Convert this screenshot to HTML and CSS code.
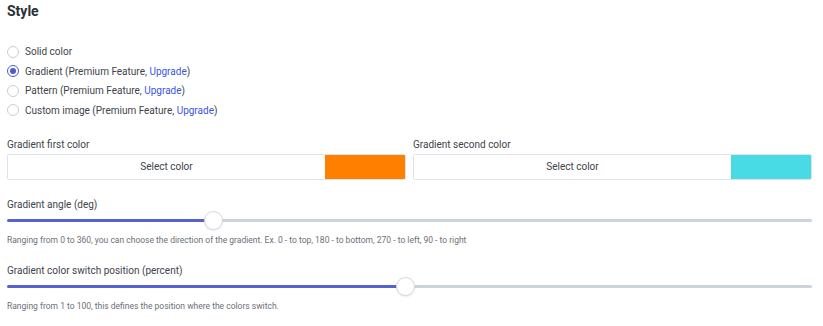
FILE: index.html
```html
<!DOCTYPE html>
<html>
<head>
<meta charset="utf-8">
<link rel="stylesheet" href="styles.css">
</head>
<body>
<div class="panel">
  <h2 class="title">Style</h2>
  <div class="radios">
    <label class="radio"><input type="radio" name="style"><span>Solid color</span></label>
    <label class="radio"><input type="radio" name="style" checked><span>Gradient (Premium Feature, <a href="#">Upgrade</a>)</span></label>
    <label class="radio"><input type="radio" name="style"><span>Pattern (Premium Feature, <a href="#">Upgrade</a>)</span></label>
    <label class="radio"><input type="radio" name="style"><span>Custom image (Premium Feature, <a href="#">Upgrade</a>)</span></label>
  </div>
  <div class="colors">
    <div class="field">
      <div class="label">Gradient first color</div>
      <div class="picker"><button class="select">Select color</button><span class="swatch orange"></span></div>
    </div>
    <div class="field">
      <div class="label">Gradient second color</div>
      <div class="picker"><button class="select">Select color</button><span class="swatch cyan"></span></div>
    </div>
  </div>
  <div class="slider-field">
    <div class="label">Gradient angle (deg)</div>
    <input class="range" type="range" min="0" max="360" value="90" style="--p:25%">
    <div class="help">Ranging from 0 to 360, you can choose the direction of the gradient. Ex. 0 - to top, 180 - to bottom, 270 - to left, 90 - to right</div>
  </div>
  <div class="slider-field">
    <div class="label">Gradient color switch position (percent)</div>
    <input class="range" type="range" min="1" max="100" value="50" style="--p:49.5%">
    <div class="help">Ranging from 1 to 100, this defines the position where the colors switch.</div>
  </div>
</div>
</body>
</html>
```
FILE: styles.css
```css
* { box-sizing: border-box; }
html, body { margin: 0; padding: 0; background: #fff; }
body {
  font-family: Roboto, "Liberation Sans", sans-serif;
  color: #3d4149;
}
.panel {
  width: 805px;
  margin-left: 7px;
  display: flex;
  flex-direction: column;
}
.title {
  margin: 0;
  font-size: 14px;
  font-weight: 700;
  line-height: 20px;
  padding-top: 1px;
  color: #2b2f36;
}
.radios {
  display: flex;
  flex-direction: column;
  gap: 6.5px;
  margin-top: 24px;
}
.radio {
  display: flex;
  align-items: center;
  gap: 6px;
  font-size: 10px;
  line-height: 13px;
  color: #40444b;
}
.radio input {
  -webkit-appearance: none;
  appearance: none;
  margin: 0;
  width: 12px;
  height: 12px;
  border: 1px solid #c9ced6;
  border-radius: 50%;
  background: #fff;
  position: relative;
}
.radio input:checked {
  border-color: #4c5bd4;
}
.radio input:checked::after {
  content: "";
  position: absolute;
  left: 2px; top: 2px;
  width: 6px; height: 6px;
  border-radius: 50%;
  background: #4c5bd4;
}
.radio a { color: #3b55e6; text-decoration: none; }
.colors {
  display: grid;
  grid-template-columns: 1fr 1fr;
  gap: 7px;
  margin-top: 22px;
}
.label {
  font-size: 10px;
  line-height: 12px;
  color: #40444b;
}
.picker {
  margin-top: 3px;
  display: flex;
  height: 26px;
  border: 1px solid #dfe3ea;
  border-radius: 2px;
  overflow: hidden;
}
.select {
  flex: 1;
  border: 0;
  background: #fff;
  font-family: inherit;
  font-size: 10px;
  color: #40444b;
  padding: 0;
}
.swatch { width: 80px; }
.orange { background: #ff7f00; }
.cyan { background: #48dbe6; }
.slider-field {
  margin-top: 19px;
  display: flex;
  flex-direction: column;
}
.slider-field + .slider-field { margin-top: 19px; }
.range {
  -webkit-appearance: none;
  appearance: none;
  width: 100%;
  margin: 0;
  height: 19px;
  background: transparent;
}
.range::-webkit-slider-runnable-track {
  height: 3px;
  border-radius: 2px;
  background: linear-gradient(to right, #5563d2 var(--p), #cdd4dd var(--p));
}
.range::-webkit-slider-thumb {
  -webkit-appearance: none;
  width: 19px;
  height: 19px;
  margin-top: -8px;
  border-radius: 50%;
  background: #fff;
  border: 1px solid #d4d9e0;
  box-shadow: 0 1px 2px rgba(0,0,0,0.08);
}
.help {
  margin-top: 5px;
  font-size: 8.5px;
  line-height: 11px;
  color: #6b7078;
}
```
